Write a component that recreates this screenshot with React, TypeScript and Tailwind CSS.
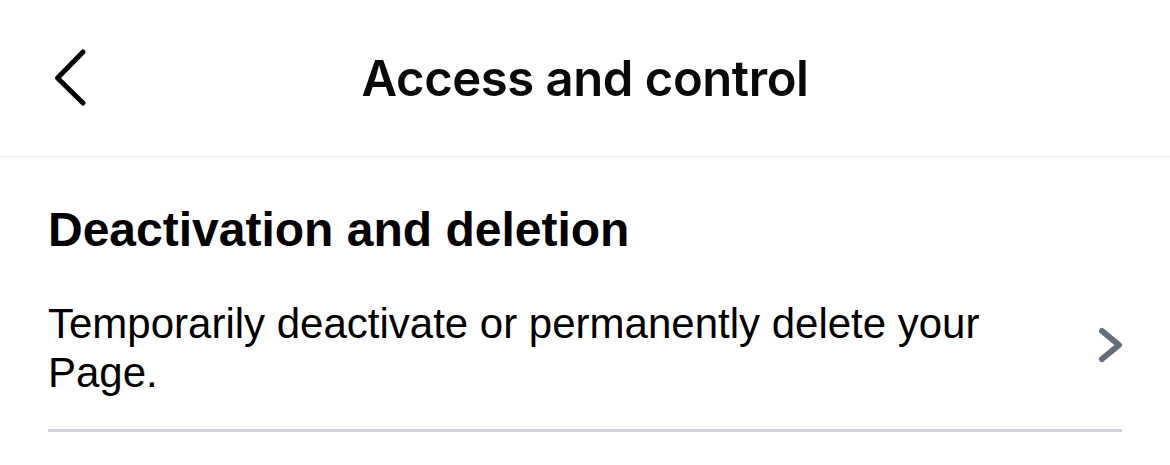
export default function App() {
  return (
    <div className="w-[1170px] h-[465px] bg-white overflow-hidden">
      <header className="relative h-[157px] border-b border-[#e5e5e5] grid grid-cols-[1fr_auto_1fr] items-center">
        <div className="pl-[52px] flex items-center">
          <svg width="36" height="60" viewBox="0 0 36 60" fill="none">
            <path d="M31 4 L5.5 30 L31 55" stroke="#000" strokeWidth="5" strokeLinecap="round" strokeLinejoin="round" />
          </svg>
        </div>
        <h1 className="font-['Inter',sans-serif] font-semibold text-[49px] leading-none text-[#0a0a0a] tracking-[-0.45px]">
          Access and control
        </h1>
        <div />
      </header>
      <section className="px-12 pt-[45px]">
        <h2 className="font-['Liberation_Sans',Arial,sans-serif] font-bold text-[48px] leading-[55px] text-black">
          Deactivation and deletion
        </h2>
        <div className="flex items-center gap-10 pt-[43px] pb-[32px] border-b-[3px] border-[#cdd0d5]">
          <p className="flex-1 font-['Liberation_Sans',Arial,sans-serif] text-[42px] leading-[48.5px] text-black">
            Temporarily deactivate or permanently delete your Page.
          </p>
          <svg width="28" height="40" viewBox="0 0 28 40" fill="none" className="shrink-0 mr-[-3px] mb-[8px]">
            <path d="M5 6 L22 20 L5 34" stroke="#656e7d" strokeWidth="6" strokeLinecap="round" strokeLinejoin="round" />
          </svg>
        </div>
      </section>
    </div>
  );
}
